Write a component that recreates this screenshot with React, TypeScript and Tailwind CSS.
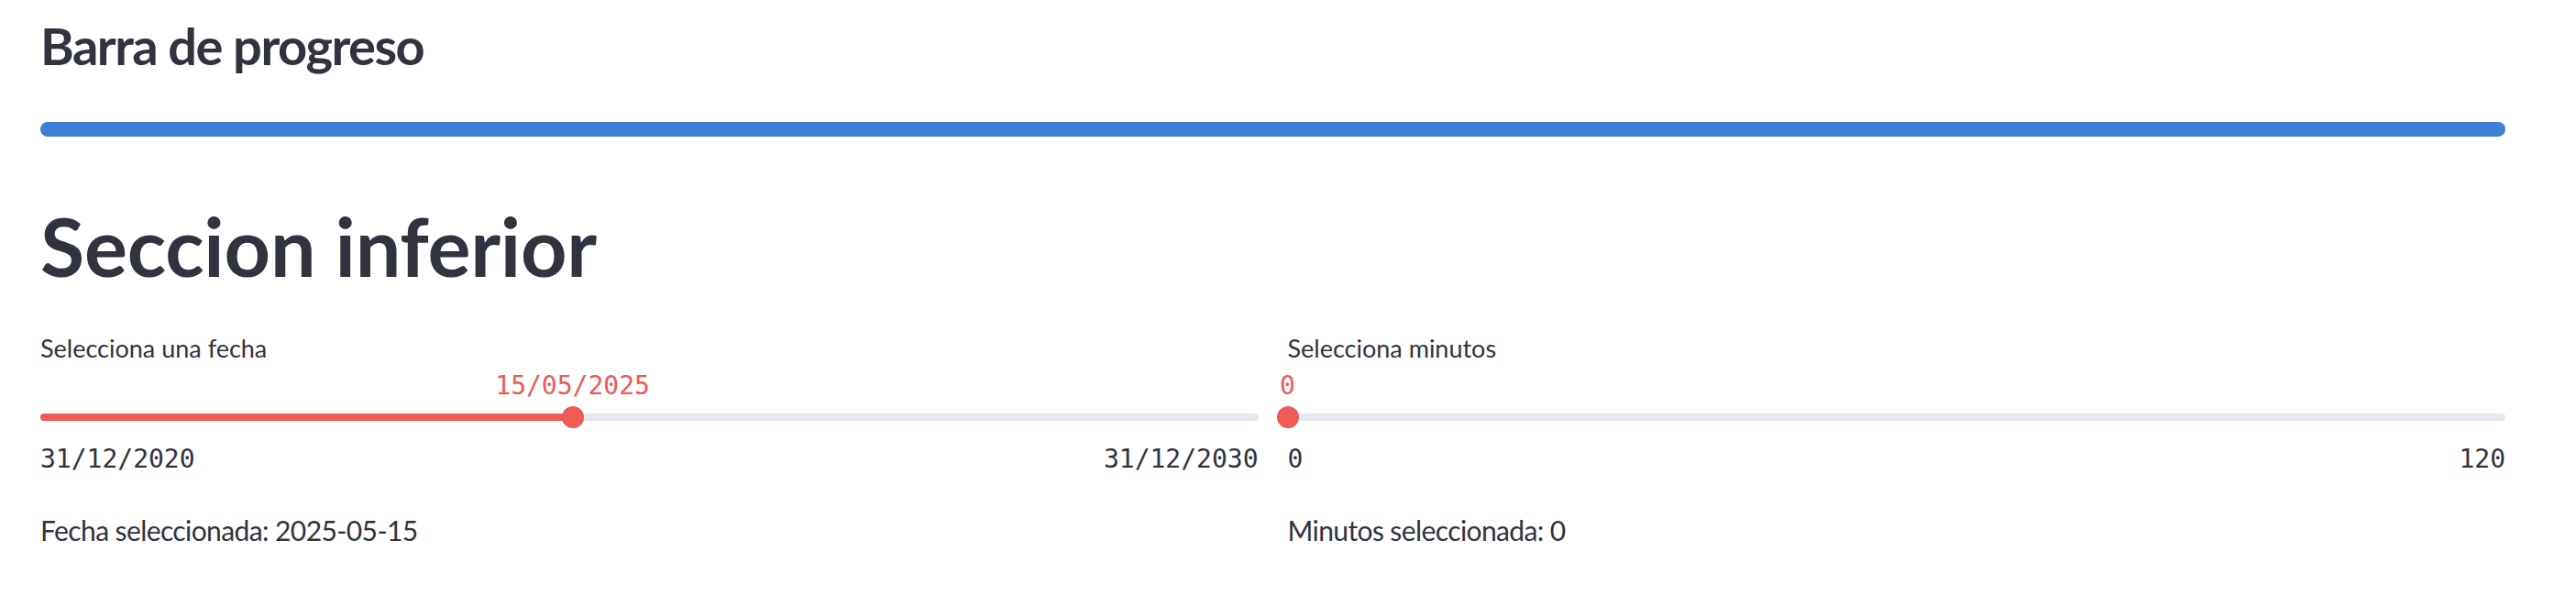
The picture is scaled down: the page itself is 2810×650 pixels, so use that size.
import React from 'react';

type SliderProps = {
  label: string;
  value: string;
  min: string;
  max: string;
  pct: number;
};

const Slider: React.FC<SliderProps> = ({ label, value, min, max, pct }) => (
  <div className="flex flex-col">
    <p className="text-[27px] leading-[1.2]">{label}</p>

    {/* valor actual sobre el thumb */}
    <div className="relative mt-[8px] h-[34px] font-['DejaVu_Sans_Mono',monospace] text-[28px] leading-[1.2] text-[#ee5a55]">
      <span className="absolute top-0 -translate-x-1/2 whitespace-nowrap" style={{ left: `${pct}%` }}>
        {value}
      </span>
    </div>

    <div className="relative mt-[5px] h-[24px] flex items-center">
      <div className="h-[8px] w-full rounded-full bg-[#e6e8ef]" />
      <div className="absolute left-0 h-[8px] rounded-full bg-[#ee5a55]" style={{ width: `${pct}%` }} />
      <div
        className="absolute top-0 h-[24px] w-[24px] -translate-x-1/2 rounded-full bg-[#ee5a55]"
        style={{ left: `${pct}%` }}
      />
    </div>

    <div className="mt-[17px] flex justify-between font-['DejaVu_Sans_Mono',monospace] text-[28px] leading-[1.2]">
      <span>{min}</span>
      <span>{max}</span>
    </div>
  </div>
);

export default function App() {
  // 2020-12-31 -> 2025-05-15 sobre 2020-12-31 -> 2030-12-31
  const datePct = (1596 / 3652) * 100;

  return (
    <div className="h-[650px] w-[2810px] overflow-hidden bg-white pl-[44px] pr-[77px] pt-[16px] font-['Lato',sans-serif] text-[#31333f]">
      <h3 className="text-[56px] font-bold leading-[1.2] tracking-[-1.5px]">Barra de progreso</h3>

      <div className="mt-[50px] h-[16px] w-full rounded-full bg-[#3e80d8]" />

      <h1 className="mt-[67px] text-[88px] font-bold leading-[1.2] tracking-[-0.2px]">Seccion inferior</h1>

      <div className="mt-[42px] grid grid-cols-2 gap-[32px]">
        <div className="flex flex-col">
          <Slider
            label="Selecciona una fecha"
            value="15/05/2025"
            min="31/12/2020"
            max="31/12/2030"
            pct={datePct}
          />
          <p className="mt-[42px] text-[30px] leading-[1.2] tracking-[-0.6px]">Fecha seleccionada: 2025-05-15</p>
        </div>
        <div className="flex flex-col">
          <Slider label="Selecciona minutos" value="0" min="0" max="120" pct={0} />
          <p className="mt-[42px] text-[30px] leading-[1.2] tracking-[-0.6px]">Minutos seleccionada: 0</p>
        </div>
      </div>
    </div>
  );
}
